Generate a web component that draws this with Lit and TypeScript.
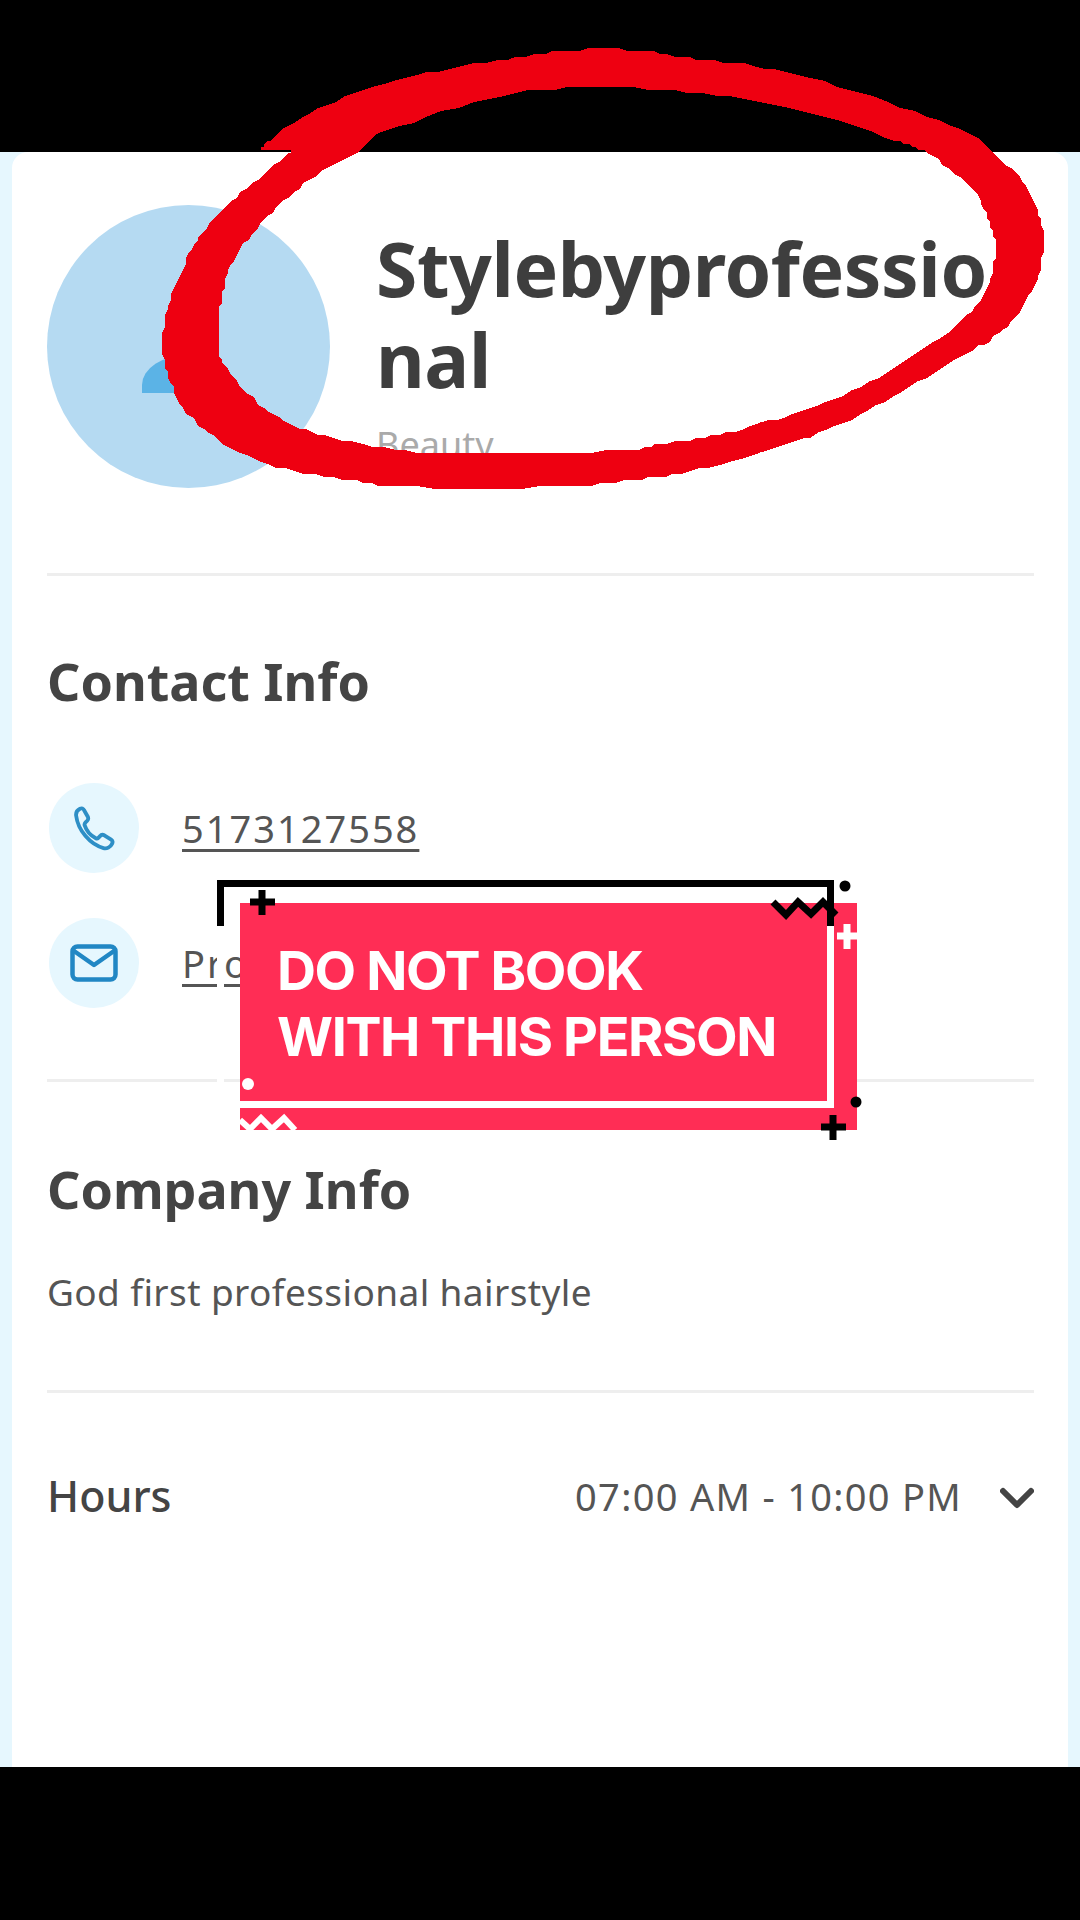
import { LitElement, html, css, svg } from "lit";
import { customElement } from "lit/decorators.js";

type P = [number, number];
const OUTER: P[] = [[263,147],[283,130],[344,97],[427,73],[517,57],[572,50],[634,50],[689,58],[764,68],[861,93],[960,130],[993,153],[1027,187],[1043,230],[1043,253],[1033,290],[1003,330],[960,357],[893,397],[827,430],[760,453],[680,473],[630,480],[557,487],[403,487],[350,480],[277,467],[223,443],[187,413],[167,373],[163,337],[170,300],[190,253],[210,223],[240,193],[283,158],[290,151],[265,151]];
const INNER: P[] = [[357,152],[390,130],[503,95],[606,88],[716,95],[826,117],[893,140],[927,153],[970,187],[990,223],[995,257],[980,300],[933,343],[860,387],[793,413],[727,433],[667,443],[617,451],[500,452],[417,452],[333,438],[283,420],[247,393],[223,363],[218,337],[222,297],[233,260],[267,217],[310,180]];

// Catmull-Rom sampled and snapped to a coarse grid: the marker stroke in the reference has stair-stepped edges.
function rough(p: P[]): string {
  const n = p.length;
  const grid = 3;
  const out: string[] = [];
  for (let i = 0; i < n; i++) {
    const a = p[(i - 1 + n) % n], b = p[i], c = p[(i + 1) % n], e = p[(i + 2) % n];
    for (let s = 0; s < 8; s++) {
      const t = s / 8, t2 = t * t, t3 = t2 * t;
      const f = (k: 0 | 1) =>
        0.5 * (2 * b[k] + (c[k] - a[k]) * t + (2 * a[k] - 5 * b[k] + 4 * c[k] - e[k]) * t2 + (3 * b[k] - a[k] - 3 * c[k] + e[k]) * t3);
      out.push(`${Math.round(f(0) / grid) * grid} ${Math.round(f(1) / grid) * grid}`);
    }
  }
  return "M" + out.join("L") + "Z";
}

@customElement("app-root")
export class AppRoot extends LitElement {
  static styles = css`
    :host { display: block; position: relative; width: 1080px; height: 1920px; overflow: hidden; background: #000; font-family: "Noto Sans", Lato, sans-serif; color: #444; }
    .page { display: flex; flex-direction: column; height: 1920px; }
    .bar { height: 152px; background: #000; flex: none; }
    .bar.bottom { height: 153px; }
    .shell { flex: 1; background: #e6f7fe; padding: 0 12px; display: flex; }
    .card { flex: 1; background: #fff; border-radius: 16px 16px 0 0; padding: 53px 34px 0 35px; }
    .head { display: flex; gap: 46px; height: 368px; border-bottom: 3px solid #eeeeee; box-sizing: content-box; }
    .avatar { width: 283px; height: 283px; border-radius: 50%; background: #b5daf2; flex: none; }
    .avatar svg { display: block; }
    .name { width: 640px; margin-top: 18px; }
    .title { font-size: 75px; line-height: 91px; font-weight: 700; word-break: break-all; color: #3e3e3e; letter-spacing: -0.4px; }
    .cat { font-size: 36px; line-height: 44px; color: #aaaaaa; margin-top: 18px; }
    h2 { margin: 0; font-size: 52px; line-height: 64px; font-weight: 700; color: #444; }
    .contact { height: 506px; border-bottom: 3px solid #eeeeee; box-sizing: border-box; padding-top: 73px; }
    .rows { display: flex; flex-direction: column; gap: 45px; margin-top: 70px; padding-left: 2px; }
    .row { display: flex; align-items: center; gap: 43px; }
    .ic { width: 90px; height: 90px; border-radius: 50%; background: #e6f7fe; display: flex; align-items: center; justify-content: center; flex: none; }
    .link { font-size: 38px; letter-spacing: 2px; color: #555; text-decoration: underline; text-underline-offset: 6px; text-decoration-thickness: 3px; }
    .company { height: 311px; border-bottom: 3px solid #eeeeee; box-sizing: border-box; padding-top: 75px; }
    .about { font-size: 37px; letter-spacing: 0.4px; line-height: 48px; color: #555; margin-top: 47px; }
    .hours { display: flex; align-items: center; justify-content: space-between; margin-top: 75px; }
    .hl { font-size: 43px; line-height: 56px; font-weight: 500; color: #444; }
    .hr { display: flex; align-items: center; gap: 38px; font-size: 38px; letter-spacing: 1.3px; color: #555; }
    .hr svg { margin-top: 4px; }
    .scribble { position: absolute; left: 0; top: 0; pointer-events: none; }
    .sticker { position: absolute; left: 217px; top: 880px; width: 645px; height: 260px; }
    .plate { position: absolute; left: 23px; top: 23px; width: 617px; height: 227px; background: #ff2d55; }
    .say { position: absolute; left: 60px; top: 58px; font-family: Inter, "Liberation Sans", sans-serif; font-weight: 700; font-size: 54px; line-height: 66px; color: #fff; letter-spacing: -1.4px; white-space: nowrap; }
    .marks { position: absolute; left: 0; top: 0; }
  `;

  render() {
    return html`
      <div class="page">
        <div class="bar"></div>
        <div class="shell">
          <div class="card">
            <div class="head">
              <div class="avatar">
                <svg width="283" height="283" viewBox="0 0 283 283"><path d="M95 188v-8a46 30 0 0 1 92 0v8z" fill="#5bb3e6"/></svg>
              </div>
              <div class="name">
                <div class="title">Stylebyprofessional</div>
                <div class="cat">Beauty</div>
              </div>
            </div>
            <div class="contact">
              <h2>Contact Info</h2>
              <div class="rows">
                <div class="row">
                  <div class="ic">
                    <svg width="41" height="46" viewBox="0 0 48 52" fill="none" stroke="#2e8fc6" stroke-width="4.500" stroke-linejoin="round"><path d="M7 3.500c-3 1.500-5 4-4.500 8 1 8 5 17 11 24 6 7 13 12 21 14 4 1 8-1 10-5 1-2 .5-4-1-5l-8-5c-2-1-3.500-1-5 1l-2 2c-1 1-2 1-3 .5-6-3-11-9-13-15-.5-1.500 0-2.500 1-3.500l2-2c1.500-1.500 1.500-3 .5-5l-4-7c-1-2.500-3-3-5-2z"/></svg>
                  </div>
                  <span class="link">5173127558</span>
                </div>
                <div class="row">
                  <div class="ic">
                    <svg width="48" height="38" viewBox="0 0 48 38" fill="none" stroke="#2187c4" stroke-width="4.500" stroke-linejoin="round" stroke-linecap="round"><rect x="2.500" y="2.500" width="43" height="33" rx="5"/><path d="M4 7l20 14L44 7"/></svg>
                  </div>
                  <span class="link">Pro</span>
                </div>
              </div>
            </div>
            <div class="company">
              <h2>Company Info</h2>
              <div class="about">God first professional hairstyle</div>
            </div>
            <div class="hours">
              <div class="hl">Hours</div>
              <div class="hr">
                <span>07:00 AM - 10:00 PM</span>
                <svg width="34" height="22" viewBox="0 0 34 22" fill="none" stroke="#444" stroke-width="6" stroke-linecap="round" stroke-linejoin="round"><path d="M3 4l14 14L31 4"/></svg>
              </div>
            </div>
          </div>
        </div>
        <div class="bar bottom"></div>
      </div>

      <svg class="scribble" width="1080" height="1920" viewBox="0 0 1080 1920" shape-rendering="crispEdges">
        ${svg`<path d="${rough(OUTER)}${rough(INNER)}" fill="#ee0011" fill-rule="evenodd"/>`}
      </svg>

      <div class="sticker">
        <svg class="marks" width="645" height="260" viewBox="0 0 645 260">
          <path d="M3.500 46V3.500H613.500V46" fill="none" stroke="#000" stroke-width="7"/>
          <path d="M3.500 46V224.500" fill="none" stroke="#fff" stroke-width="7"/>
        </svg>
        <div class="plate"></div>
        <svg class="marks" width="645" height="260" viewBox="0 0 645 260">
          <path d="M613.500 46V224.500H23" fill="none" stroke="#fff" stroke-width="7"/>
          <path d="M613.500 23V46" fill="none" stroke="#000" stroke-width="7"/>
          <path d="M45 10v25M33 22h25" stroke="#000" stroke-width="7" fill="none"/>
          <path d="M556 22l13 13 12-13 13 12 12-12 13 13" stroke="#000" stroke-width="7" fill="none"/>
          <circle cx="628" cy="6" r="5.500" fill="#000"/>
          <circle cx="639" cy="222" r="5.500" fill="#000"/>
          <path d="M616 235v25M604 247h25" stroke="#000" stroke-width="7" fill="none"/>
          <path d="M630 44v25M620 56h20" stroke="#fff" stroke-width="7" fill="none"/>
          <circle cx="31" cy="204" r="6" fill="#fff"/>
          <path d="M23 240l10 9 11-11 11 11 12-11 11 12" stroke="#fff" stroke-width="6" fill="none"/>
          <rect x="20" y="250" width="80" height="10" fill="#fff"/>
        </svg>
        <div class="say">DO NOT BOOK<br />WITH THIS PERSON</div>
      </div>
    `;
  }
}
